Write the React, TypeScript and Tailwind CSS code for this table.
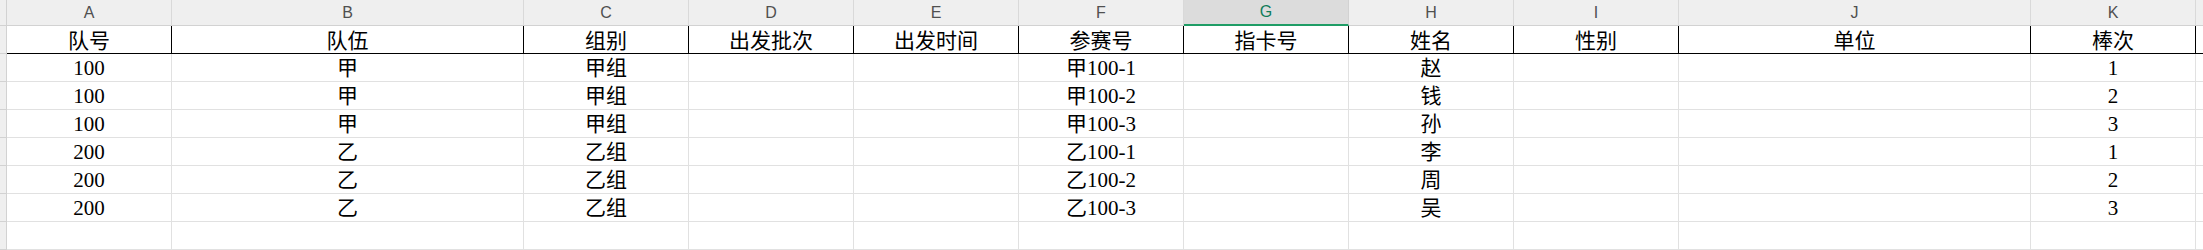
import React from 'react';

type Col = { key: string; width: string; title: string };

const COLUMNS: Col[] = [
  { key: 'A', width: 'w-[165px]', title: '队号' },
  { key: 'B', width: 'w-[352px]', title: '队伍' },
  { key: 'C', width: 'w-[165px]', title: '组别' },
  { key: 'D', width: 'w-[165px]', title: '出发批次' },
  { key: 'E', width: 'w-[165px]', title: '出发时间' },
  { key: 'F', width: 'w-[165px]', title: '参赛号' },
  { key: 'G', width: 'w-[165px]', title: '指卡号' },
  { key: 'H', width: 'w-[165px]', title: '姓名' },
  { key: 'I', width: 'w-[165px]', title: '性别' },
  { key: 'J', width: 'w-[352px]', title: '单位' },
  { key: 'K', width: 'w-[165px]', title: '棒次' },
];

const ROWS: string[][] = [
  ['100', '甲', '甲组', '', '', '甲100-1', '', '赵', '', '', '1'],
  ['100', '甲', '甲组', '', '', '甲100-2', '', '钱', '', '', '2'],
  ['100', '甲', '甲组', '', '', '甲100-3', '', '孙', '', '', '3'],
  ['200', '乙', '乙组', '', '', '乙100-1', '', '李', '', '', '1'],
  ['200', '乙', '乙组', '', '', '乙100-2', '', '周', '', '', '2'],
  ['200', '乙', '乙组', '', '', '乙100-3', '', '吴', '', '', '3'],
  ['', '', '', '', '', '', '', '', '', '', ''],
];

const cellFont = { fontFamily: '"Liberation Serif", "Noto Sans CJK SC", serif' };
const letterFont = { fontFamily: '"Liberation Sans", Arial, sans-serif' };

export default function App() {
  return (
    <div className="w-[2203px] h-[250px] overflow-hidden bg-white text-black">
      {/* Column letters */}
      <div className="flex h-[26px] bg-[#efefef] border-b border-[#d2d2d2]">
        <div className="w-[7px] shrink-0 border-r border-[#d2d2d2]" />
        {COLUMNS.map((c) =>
          c.key === 'G' ? (
            <div
              key={c.key}
              className={`${c.width} shrink-0 -mb-px h-[26px] flex items-center justify-center bg-[#dcdcdc] border-r border-[#d2d2d2] border-b-2 border-b-[#1f9d66] text-[16px] text-[#107c5a]`}
              style={letterFont}
            >
              {c.key}
            </div>
          ) : (
            <div
              key={c.key}
              className={`${c.width} shrink-0 flex items-center justify-center border-r border-[#d9d9d9] text-[16px] text-[#505050]`}
              style={letterFont}
            >
              {c.key}
            </div>
          )
        )}
        <div className="flex-1" />
      </div>

      {/* Title row */}
      <div className="flex h-[28px]">
        <div className="w-[7px] shrink-0 bg-[#efefef] border-r border-b border-[#d2d2d2]" />
        {COLUMNS.map((c) => (
          <div
            key={c.key}
            className={`${c.width} shrink-0 flex items-end justify-center border-r border-b border-black text-[21px] leading-none pb-px`}
            style={cellFont}
          >
            {c.title}
          </div>
        ))}
        <div className="flex-1 border-b border-black" />
      </div>

      {/* Data rows */}
      {ROWS.map((row, i) => (
        <div key={i} className="flex h-[28px]">
          <div className="w-[7px] shrink-0 bg-[#efefef] border-r border-b border-[#d2d2d2]" />
          {COLUMNS.map((c, j) => (
            <div
              key={c.key}
              className={`${c.width} shrink-0 flex items-end justify-center border-r border-b border-[#e1e1e1] text-[21px] leading-none pb-[2px]`}
              style={cellFont}
            >
              {row[j]}
            </div>
          ))}
          <div className="flex-1 border-b border-[#e1e1e1]" />
        </div>
      ))}
    </div>
  );
}
